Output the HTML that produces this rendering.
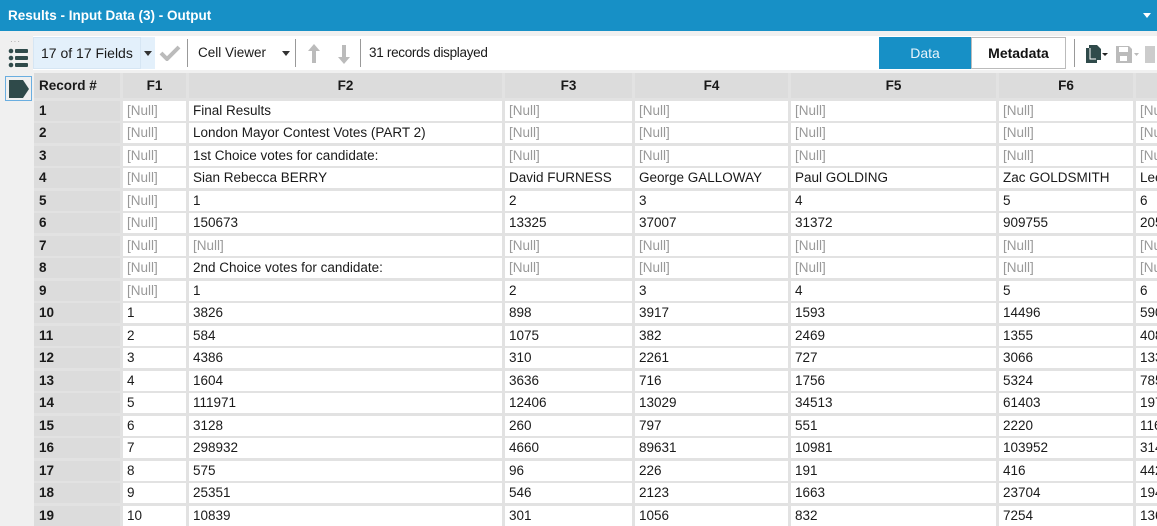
<!DOCTYPE html>
<html><head><style>
*{box-sizing:border-box;margin:0;padding:0}
body{width:1157px;height:521px;overflow:hidden;background:#f0f0f0;font-family:"Liberation Sans",sans-serif;font-size:13.5px;color:#1a1a1a;position:relative}
.title{position:absolute;left:0;top:0;width:1157px;height:31px;background:#1790c6;color:#fff;font-weight:bold;font-size:13.5px;line-height:31px;padding-left:8px}
.title .dd{position:absolute;right:6px;top:13px;border-left:4px solid transparent;border-right:4px solid transparent;border-top:5px solid #fff}
.tb{position:absolute;left:33px;top:36px;width:1124px;height:34px;background:#fff}
.fields{position:absolute;left:0;top:1px;width:108px;height:32px;background:#e3f0fb;border:1px solid #d6e6f4;line-height:30px;padding-left:7px;font-size:14px}
.fdd{position:absolute;left:108px;top:1px;width:14px;height:32px;background:#e3f0fb}
.tri{position:absolute;border-left:4px solid transparent;border-right:4px solid transparent;border-top:5px solid #333}
.txt{position:absolute;top:0;line-height:34px;font-size:13.5px}
.sep{position:absolute;top:3px;width:1px;height:28px;background:#999}
.data{position:absolute;left:846px;top:1px;width:92px;height:32px;background:#1790c6;color:#e8f4fb;text-align:center;line-height:32px;font-size:14px}
.meta{position:absolute;left:938px;top:1px;width:95px;height:32px;border:1px solid #bbb;text-align:center;line-height:30px;font-size:14px;font-weight:bold;color:#111}
.grid{position:absolute;left:34px;top:73px;display:grid;grid-template-columns:86px 63px 313px 127px 153px 205px 134px 60px;grid-template-rows:25px;grid-auto-rows:20px;column-gap:3px;row-gap:2.5px;background:#e2e2e2}
.grid div{background:#fff;padding-left:4px;line-height:20px;white-space:nowrap;overflow:hidden}
.grid .h{background:#dcdcdc;font-weight:bold;text-align:center;line-height:25px;padding:0}
.grid .h0{text-align:left;padding-left:5px}
.grid .r{background:#dcdcdc;font-weight:bold;padding-left:5px}
.grid .n{color:#999}
</style></head><body>
<div class="title">Results - Input Data (3) - Output<span class="dd"></span></div>
<div style="position:absolute;left:10px;top:37px;color:#999;font-size:8px;letter-spacing:1px">···</div>
<svg style="position:absolute;left:8px;top:48px" width="20" height="20"><g fill="#2f4a4a"><circle cx="3" cy="3" r="2.3"/><rect x="7" y="1" width="13" height="4" rx="1"/><circle cx="3" cy="10" r="2.3"/><rect x="7" y="8" width="13" height="4" rx="1"/><circle cx="3" cy="17" r="2.3"/><rect x="7" y="15" width="13" height="4" rx="1"/></g></svg>
<div style="position:absolute;left:5px;top:76px;width:27px;height:25px;border:1px solid #6aaee0;background:#f0f0f0"></div>
<svg style="position:absolute;left:8px;top:79px" width="22" height="20"><path d="M1 1H15L21 10L15 19H1Z" fill="#2f4a4a"/></svg>
<div class="tb">
<div class="fields">17 of 17 Fields</div><div class="fdd"><span class="tri" style="left:3px;top:14px"></span></div>
<svg style="position:absolute;left:126px;top:9px" width="22" height="16"><path d="M2 8L8 14L20 2" stroke="#bbb" stroke-width="4" fill="none"/></svg>
<div class="sep" style="left:154px"></div>
<div class="txt" style="left:165px">Cell Viewer</div><span class="tri" style="left:249px;top:15px"></span>
<div class="sep" style="left:262px"></div>
<svg style="position:absolute;left:274px;top:8px" width="50" height="20"><path d="M7 0L1 7H5V19H9V7H13Z" fill="#bbb"/><path d="M37 20L31 13H35V1H39V13H43Z" fill="#bbb"/></svg>
<div class="sep" style="left:327px"></div>
<div class="txt" style="left:336px;letter-spacing:-0.3px">31 records displayed</div>
<div class="data">Data</div><div class="meta">Metadata</div>
<div class="sep" style="left:1041px"></div>
<svg style="position:absolute;left:1050px;top:7px" width="74" height="22"><path d="M3 5H6V2H14L18 6V17H14V20H3Z" fill="#2f4a4a"/><path d="M7 5L7 16H13" stroke="#fff" stroke-width="1" fill="none"/><path d="M19 10H25L22 13Z" fill="#222"/><path d="M33 3H46L49 6V20H33Z" fill="#bbb"/><rect x="36" y="4" width="9" height="5" fill="#fff"/><rect x="37" y="13" width="7" height="5" fill="#fff"/><path d="M51 10H56L53.5 13Z" fill="#bbb"/><rect x="62" y="3" width="10" height="17" fill="#ccc"/></svg>
</div>
<div class="grid">
<div class="h h0">Record #</div><div class="h">F1</div><div class="h">F2</div><div class="h">F3</div><div class="h">F4</div><div class="h">F5</div><div class="h">F6</div><div class="h"></div>
<div class="r">1</div><div class="n">[Null]</div><div>Final Results</div><div class="n">[Null]</div><div class="n">[Null]</div><div class="n">[Null]</div><div class="n">[Null]</div><div class="n">[Null]</div>
<div class="r">2</div><div class="n">[Null]</div><div>London Mayor Contest Votes (PART 2)</div><div class="n">[Null]</div><div class="n">[Null]</div><div class="n">[Null]</div><div class="n">[Null]</div><div class="n">[Null]</div>
<div class="r">3</div><div class="n">[Null]</div><div>1st Choice votes for candidate:</div><div class="n">[Null]</div><div class="n">[Null]</div><div class="n">[Null]</div><div class="n">[Null]</div><div class="n">[Null]</div>
<div class="r">4</div><div class="n">[Null]</div><div>Sian Rebecca BERRY</div><div>David FURNESS</div><div>George GALLOWAY</div><div>Paul GOLDING</div><div>Zac GOLDSMITH</div><div>Lee HARRIS</div>
<div class="r">5</div><div class="n">[Null]</div><div>1</div><div>2</div><div>3</div><div>4</div><div>5</div><div>6</div>
<div class="r">6</div><div class="n">[Null]</div><div>150673</div><div>13325</div><div>37007</div><div>31372</div><div>909755</div><div>20537</div>
<div class="r">7</div><div class="n">[Null]</div><div class="n">[Null]</div><div class="n">[Null]</div><div class="n">[Null]</div><div class="n">[Null]</div><div class="n">[Null]</div><div class="n">[Null]</div>
<div class="r">8</div><div class="n">[Null]</div><div>2nd Choice votes for candidate:</div><div class="n">[Null]</div><div class="n">[Null]</div><div class="n">[Null]</div><div class="n">[Null]</div><div class="n">[Null]</div>
<div class="r">9</div><div class="n">[Null]</div><div>1</div><div>2</div><div>3</div><div>4</div><div>5</div><div>6</div>
<div class="r">10</div><div>1</div><div>3826</div><div>898</div><div>3917</div><div>1593</div><div>14496</div><div>590</div>
<div class="r">11</div><div>2</div><div>584</div><div>1075</div><div>382</div><div>2469</div><div>1355</div><div>408</div>
<div class="r">12</div><div>3</div><div>4386</div><div>310</div><div>2261</div><div>727</div><div>3066</div><div>133</div>
<div class="r">13</div><div>4</div><div>1604</div><div>3636</div><div>716</div><div>1756</div><div>5324</div><div>785</div>
<div class="r">14</div><div>5</div><div>111971</div><div>12406</div><div>13029</div><div>34513</div><div>61403</div><div>197</div>
<div class="r">15</div><div>6</div><div>3128</div><div>260</div><div>797</div><div>551</div><div>2220</div><div>116</div>
<div class="r">16</div><div>7</div><div>298932</div><div>4660</div><div>89631</div><div>10981</div><div>103952</div><div>314</div>
<div class="r">17</div><div>8</div><div>575</div><div>96</div><div>226</div><div>191</div><div>416</div><div>442</div>
<div class="r">18</div><div>9</div><div>25351</div><div>546</div><div>2123</div><div>1663</div><div>23704</div><div>194</div>
<div class="r">19</div><div>10</div><div>10839</div><div>301</div><div>1056</div><div>832</div><div>7254</div><div>136</div>
</div>
</body></html>
